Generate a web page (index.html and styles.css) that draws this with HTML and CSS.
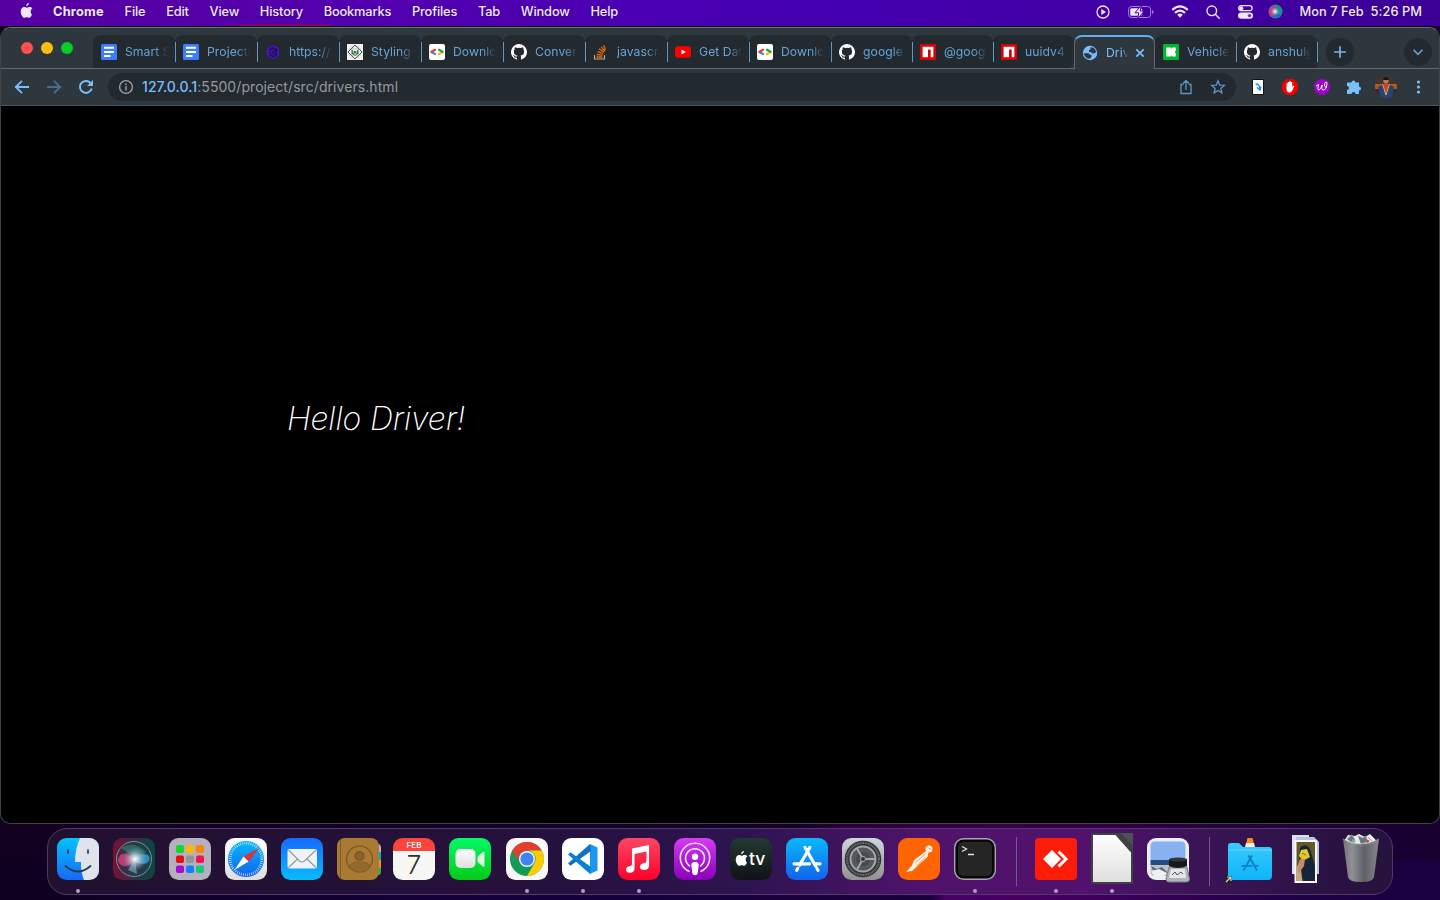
FILE: index.html
```html
<!DOCTYPE html>
<html lang="en">
<head>
<meta charset="utf-8">
<title>Drivers</title>
<link rel="stylesheet" href="styles.css">
</head>
<body>
<svg class="defs" aria-hidden="true">
  <defs>
    <linearGradient id="gBlue" x2="0" y2="1"><stop stop-color="#1769fb"/><stop offset="1" stop-color="#08bcff"/></linearGradient>
    <linearGradient id="gFinder" x2="0" y2="1"><stop stop-color="#05c3fb"/><stop offset="1" stop-color="#1768f8"/></linearGradient>
    <linearGradient id="gSky" x2="0" y2="1"><stop stop-color="#08b9fc"/><stop offset="1" stop-color="#1462ec"/></linearGradient>
    <linearGradient id="gGreen" x2="0" y2="1"><stop stop-color="#05f966"/><stop offset="1" stop-color="#04cb18"/></linearGradient>
    <linearGradient id="gRed" x2="0" y2="1"><stop stop-color="#fc4667"/><stop offset="1" stop-color="#fa0229"/></linearGradient>
    <linearGradient id="gPurple" x2="0" y2="1"><stop stop-color="#d63bf5"/><stop offset="1" stop-color="#8900b9"/></linearGradient>
    <linearGradient id="gWhite" x2="0" y2="1"><stop stop-color="#fff"/><stop offset="1" stop-color="#dedede"/></linearGradient>
    <linearGradient id="gGray" x2="0" y2="1"><stop stop-color="#cbd7dc"/><stop offset="1" stop-color="#929190"/></linearGradient>
    <linearGradient id="gSiri"><stop stop-color="#790e35"/><stop offset=".5" stop-color="#333047"/><stop offset="1" stop-color="#06483e"/></linearGradient>
    <radialGradient id="gGlow"><stop stop-color="#fff"/><stop offset=".3" stop-color="#d9dbe9" stop-opacity=".8"/><stop offset="1" stop-color="#7ba3ba" stop-opacity="0"/></radialGradient>
    <linearGradient id="gFolder" x2="0" y2="1"><stop stop-color="#38cafe"/><stop offset="1" stop-color="#0fb4f8"/></linearGradient>
    <linearGradient id="gBin"><stop stop-color="#77797c"/><stop offset=".25" stop-color="#949699"/><stop offset=".6" stop-color="#626468"/><stop offset="1" stop-color="#8b8c90"/></linearGradient>
    <symbol id="apple" viewBox="0 0 14 17"><path d="M9.6 0c.1 1.600-1.300 3.300-2.900 3.400C6.500 1.800 8 .2 9.600 0zM12.900 12.200c-.7 1.700-1.900 3.700-3.100 3.700-.9 0-1.300-.6-2.500-.6s-1.600.6-2.500.6C3.200 15.900.8 12.600.8 9c0-2.900 1.800-4.700 3.700-4.700 1.100 0 1.900.7 2.900.7s1.700-.8 3.100-.8c1.200 0 2.200.6 2.800 1.500-2.500 1.500-2.100 5.300-.4 6.500z"/></symbol>
    <symbol id="doc" viewBox="0 0 16 16"><rect width="16" height="16" rx="1.500" fill="#3d7dfd"/><path d="M3 3.800h10M3 7.900h10M3 12h6.500" stroke="#fff" stroke-width="2"/></symbol>
    <symbol id="github" viewBox="0 0 16 16"><path fill="#fff" d="M8 0a8 8 0 0 0-2.500 15.600c.4.100.5-.2.500-.4v-1.500c-2.200.5-2.700-1-2.700-1-.4-.9-.9-1.200-.9-1.200-.7-.5.100-.5.100-.5.800.1 1.200.8 1.200.8.700 1.200 1.900.9 2.300.7.100-.5.300-.9.500-1.100-1.800-.2-3.600-.9-3.600-4 0-.9.300-1.600.8-2.100-.1-.2-.4-1 .1-2.100 0 0 .7-.2 2.200.8a7.700 7.700 0 0 1 4 0c1.500-1 2.200-.8 2.200-.8.400 1.100.2 1.900.1 2.100.5.600.8 1.300.8 2.100 0 3.100-1.900 3.800-3.700 4 .3.300.6.800.6 1.500v2.300c0 .2.100.5.500.4A8 8 0 0 0 8 0z"/></symbol>
    <symbol id="gdev" viewBox="0 0 16 16"><rect width="16" height="16" rx="2" fill="#fff"/><g fill="none" stroke-width="2.300" stroke-linecap="round"><path d="M2.500 8 6 10" stroke="#4285f4"/><path d="M2.500 7.700 6 5.800" stroke="#ea4335"/><path d="M13.500 8 10 10" stroke="#fbbc04"/><path d="M13.500 7.700 10 5.800" stroke="#1ca652"/></g></symbol>
    <symbol id="npm" viewBox="0 0 16 16"><path fill="#d90008" d="M0 0h16v16H0z"/><path fill="#fff" d="M2.600 2.800h10.800v10.500h-2.700V5.500H8v7.800H2.600z"/></symbol>
    <symbol id="store" viewBox="0 0 30 27"><g fill="none" stroke="currentColor" stroke-width="3.200" stroke-linecap="round"><path d="m13 2 10.600 18.500M17.800 2 7.500 19.700M5.700 23l-1 1.800M2 18.300h15.500M23 18.300h5M25 23l1 1.800"/></g></symbol>
  </defs>
</svg>

<div class="desktop">
  <header class="menubar">
    <nav class="menus">
      <svg class="apple"><use href="#apple"/></svg>
      <b>Chrome</b><span>File</span><span>Edit</span><span>View</span><span>History</span><span>Bookmarks</span><span>Profiles</span><span>Tab</span><span>Window</span><span>Help</span>
    </nav>
    <div class="status">
      <svg width="14" height="14" viewBox="0 0 14 14"><circle cx="7" cy="7" r="6" fill="none" stroke="#eee6fb" stroke-width="1.300"/><path d="M5.300 4v6l4.700-3z" fill="#eee6fb"/></svg>
      <svg class="battery" width="26" height="14" viewBox="0 0 26 14"><rect x=".6" y="1.500" width="22" height="11" rx="3" fill="none" stroke="#a884d9"/><path d="M24 5v4q1.500-.5 1.500-2T24 5z" fill="#a884d9"/><rect x="2.200" y="3.200" width="12" height="7.600" rx="1.500" fill="#eee6fb"/><path d="M13.500 0 7 7.800h3.800L9.500 14l6.600-8h-3.900z" fill="#eee6fb" stroke="#4300a9"/></svg>
      <svg class="wifi" width="18" height="13" viewBox="0 0 18 13"><g fill="none" stroke="#eee6fb" stroke-width="2.200"><path d="M1.200 4.900q7.800-7 15.600 0M4 7.900q5-4.600 10 0"/></g><path d="m6.200 9.700 2.800 3 2.800-3q-2.800-2.200-5.600 0z" fill="#eee6fb"/></svg>
      <svg class="search" width="14" height="14" viewBox="0 0 14 14"><g fill="none" stroke="#eee6fb" stroke-width="1.400" stroke-linecap="round"><circle cx="5.800" cy="5.800" r="4.800"/><path d="m9.300 9.300 3.900 3.900"/></g></svg>
      <svg class="control" width="15" height="14" viewBox="0 0 15 14"><rect x=".7" y=".7" width="13.400" height="5" rx="2.500" fill="none" stroke="#eee6fb" stroke-width="1.300"/><circle cx="3.300" cy="3.200" r="2" fill="#eee6fb"/><rect y="7.400" width="15" height="6.400" rx="3.200" fill="#eee6fb"/><circle cx="11.500" cy="10.600" r="1.700" fill="#6632b0"/></svg>
      <svg class="siri" width="15" height="15" viewBox="0 0 15 15"><circle cx="7.500" cy="7.500" r="7" fill="#19908c"/><path d="M7 1a7 7 0 0 0-4 12l5-5z" fill="#c83a83"/><path d="M4 12q5-4 9-1-4 5-9 1" fill="#3165c8"/><circle cx="7" cy="7.500" r="4.500" fill="url(#gGlow)"/></svg>
      <time>Mon 7 Feb&nbsp; 5:26 PM</time>
    </div>
  </header>

  <main class="window">
    <div class="tabstrip">
      <div class="lights"><i class="close"></i><i class="min"></i><i class="max"></i></div>
      <div class="tabs">
        <div class="tab"><svg><use href="#doc"/></svg><span>Smart S</span></div>
        <div class="tab"><svg><use href="#doc"/></svg><span>ProjectD</span></div>
        <div class="tab"><svg viewBox="0 0 16 16"><path d="m8 1.500 5.500 3.200v6.600L8 14.500l-5.500-3.200V4.700z" fill="#3a10b0" stroke="#5313d1"/><path d="m4 6 4-2 4 2-5 2M5 8v3l3 2 3-2V8L8 10" fill="none" stroke="#21123d" stroke-width="1.200"/></svg><span>https://l</span></div>
        <div class="tab"><svg viewBox="0 0 16 16"><path d="M0 0h16v16H0z" fill="#f1f1ec"/><path d="m8 1 7 7-7 7-7-7z" fill="none" stroke="#464b48"/><path d="M2 5h12M2 11h12M5 2v12M11 2v12" stroke="#9a9f9b" stroke-width=".5"/><path d="M4.500 5.500 6.500 7h3l2-1.500v4L8 12 4.500 9.500z" fill="#427657"/><path d="M6 8h1m2 0h1M7 10h2" stroke="#fff"/></svg><span>Styling</span></div>
        <div class="tab"><svg><use href="#gdev"/></svg><span>Downlo</span></div>
        <div class="tab"><svg><use href="#github"/></svg><span>Convert</span></div>
        <div class="tab"><svg viewBox="0 0 16 16"><path d="M1.500 11v4h10v-4" fill="none" stroke="#a9adb0" stroke-width="1.200"/><g stroke="#ee6902" stroke-width="1.300"><path d="M3.500 13h6M3.700 10.500l6 .6M4.500 7.700l5.600 1.800M6 4.800l5 3.300M8.200 2.800l3.600 4.300M10.800 1.300l1.500 5"/></g></svg><span>javascri</span></div>
        <div class="tab"><svg viewBox="0 0 16 16"><rect y="2.300" width="16" height="11.500" rx="3" fill="#f00"/><path d="m6.500 5.600 4.300 2.400-4.300 2.500z" fill="#fff"/></svg><span>Get Dat</span></div>
        <div class="tab"><svg><use href="#gdev"/></svg><span>Downlo</span></div>
        <div class="tab narrow"><svg><use href="#github"/></svg><span>google-</span></div>
        <div class="tab narrow"><svg><use href="#npm"/></svg><span>@googl</span></div>
        <div class="tab narrow before"><svg><use href="#npm"/></svg><span>uuidv4</span></div>
        <div class="tab narrow active"><svg viewBox="0 0 16 16"><circle cx="8" cy="8" r="7.200" fill="#78bffd"/><path d="M1.800 8.300h4.400q1.800 0 1.800 1.800h1.500v1.600q-1 1.800-2 2-5.200-.5-5.700-5.400M8.500 2.200q4.500 0 5.700 4.800L12 8.500H9.500V7H7V5l1.500-.5z" fill="#2f373e"/></svg><span>Drive</span><svg class="x" viewBox="0 0 10 10"><path d="m1.300 1.300 7.400 7.400m0-7.400L1.300 8.700" stroke="#79bffc" stroke-width="1.700"/></svg></div>
        <div class="tab narrow"><svg viewBox="0 0 16 16"><rect width="16" height="16" rx="1" fill="#02b832"/><path d="M3.300 3.500h4.700v1.500l1.200-1.500h3.600v3.300L11.600 8l1.200 1.200v3.300H9.200L8 11v1.500H3.300z" fill="#fff"/></svg><span>Vehicle</span></div>
        <div class="tab narrow"><svg><use href="#github"/></svg><span>anshulg</span></div>
      </div>
      <svg class="round" viewBox="0 0 28 28"><path d="M14 8.200v11.600M8.200 14h11.600" stroke="#72b6f0" stroke-width="1.700"/></svg>
      <svg class="round list" viewBox="0 0 28 28"><path d="m9.500 11.800 4.500 4.500 4.500-4.500" fill="none" stroke="#649bcb" stroke-width="1.700"/></svg>
    </div>
    <div class="toolbar">
      <svg class="nav" viewBox="0 0 16 16"><path d="M15 8H2.500M8 1.800 1.800 8 8 14.200" fill="none" stroke="#79bffc" stroke-width="1.900"/></svg>
      <svg class="nav" viewBox="0 0 16 16"><path d="M1 8h12.500M8 1.800 14.200 8 8 14.200" fill="none" stroke="#496d8c" stroke-width="1.900"/></svg>
      <svg class="nav" viewBox="0 0 16 16"><path d="M13.700 9.500A6 6 0 1 1 12.500 4" fill="none" stroke="#79bffc" stroke-width="2"/><path d="M15 1v6H9z" fill="#79bffc"/></svg>
      <div class="address">
        <svg viewBox="0 0 16 16" class="info"><circle cx="8" cy="8" r="6.400" fill="none" stroke="#9ba0a4" stroke-width="1.400"/><path d="M8 7v4.600M8 4.400v1.700" stroke="#9ba0a4" stroke-width="1.500"/></svg>
        <p><b>127.0.0.1</b>:5500/project/src/drivers.html</p>
        <svg class="share" viewBox="0 0 16 16"><path d="M5.300 5.500H3v9h10v-9h-2.300M8 11V2M5 4.500l3-3 3 3" fill="none" stroke="#6095c3" stroke-width="1.300"/></svg>
        <svg class="star" viewBox="0 0 16 16"><path d="m8 1.800 1.700 4.300 4.600.3-3.500 3 1.100 4.500L8 11.500l-3.900 2.400 1.100-4.500-3.500-3 4.600-.3z" fill="none" stroke="#6095c3" stroke-width="1.300"/></svg>
      </div>
      <div class="extensions">
        <svg viewBox="0 0 16 16"><path d="M2.500.5h11v15h-11z" fill="#fff" stroke="#111"/><path d="M5.500 5q4 0 4.500 5M7 8.500l3 2.500 1-3.500" fill="none" stroke="#168bf7" stroke-width="1.400"/></svg>
        <svg viewBox="0 0 16 16"><path d="M4.700 0h6.600L16 4.700v6.600L11.300 16H4.700L0 11.300V4.700z" fill="#f40000"/><path d="M4.500 8.500V4.300h1.300V3h1.400v-.8h1.500V3h1.500v5l1-1.500 1 .8-2 4.500q-1 1.700-3 1.700-3 0-2.700-5z" fill="#fff"/></svg>
        <svg viewBox="0 0 16 16"><circle cx="8" cy="8" r="8" fill="#9b05c6"/><path d="M2 7 4.700 5.500q-1.700 5.500 0 5.500t3.500-5q-1 5 .8 5 3.500 0 4-6.500 0-2-1.200-1.500-1.500 1-1.300 3.500.3 2 2.500 1.500" fill="none" stroke="#fff" stroke-width="1"/></svg>
        <svg viewBox="0 0 16 16"><path d="M1 3.500h4.500a2 2 0 1 1 4 0H13v4a2 2 0 1 1 0 4V15H9.500a2 2 0 0 0-4 0H1v-4a2 2 0 0 0 0-4z" fill="#79bffc"/></svg>
        <svg class="avatar" viewBox="0 0 22 22"><defs><clipPath id="av"><circle cx="11" cy="11" r="11"/></clipPath></defs><g clip-path="url(#av)"><path d="M0 0h22v22H0z" fill="#4a3228"/><path d="M0 8h22v5H0z" fill="#b55b18"/><path d="M0 13h22v9H0z" fill="#3a2a2a"/><path d="m3 11 5-3h6l5 3-2 11H5z" fill="#25447a"/><path d="m8 8 3 10 3-10z" fill="#d93a2c"/><path d="M7.500 8 11 19l3.500-11" fill="none" stroke="#e8b53a"/><circle cx="11" cy="5" r="2.700" fill="#b47a5c"/><path d="M8 4q0-3 3-3t3 3z" fill="#171719"/></g></svg>
        <svg viewBox="0 0 16 16"><g fill="#79bffc"><circle cx="8.500" cy="3" r="1.600"/><circle cx="8.500" cy="8" r="1.600"/><circle cx="8.500" cy="13" r="1.600"/></g></svg>
      </div>
    </div>
    <section class="page"><h1>Hello Driver!</h1></section>
  </main>

  <footer class="dockwrap"><div class="dock">
    <div class="app run"><svg viewBox="0 0 42 42"><rect width="42" height="42" rx="9.500" fill="url(#gFinder)"/><path d="M23 0q-5 11-5 24h6q-.5 9 3 18h5.500a9.500 9.500 0 0 0 9.500-9.500v-23A9.500 9.500 0 0 0 32.500 0z" fill="#dfe4ec"/><path d="M11 12v3m20-3v3M8.500 28q12.500 11 25 0" fill="none" stroke="#20384d" stroke-width="1.700" stroke-linecap="round"/></svg></div>
    <div class="app"><svg viewBox="0 0 42 42"><rect width="42" height="42" rx="9.500" fill="url(#gSiri)"/><circle cx="21" cy="21" r="17.500" fill="#263b54" fill-opacity=".5" stroke="#739692"/><path d="M8 10q13-8 25 4-8 5-12 6-7-6-13-10" fill="#2d9a7c" opacity=".5"/><path d="M5 22q2-8 9-6 5 2 8 5-7 10-14 6-3-2-3-5" fill="#e0417e" opacity=".75"/><path d="M20 21q9-7 15-4 4 4-1 8-9 3-14-4" fill="#2caadc" opacity=".75"/><path d="m22 21 2 15-9-4z" fill="#7ab6c4" opacity=".6"/><circle cx="22" cy="21" r="12" fill="url(#gGlow)"/></svg></div>
    <div class="app"><svg viewBox="0 0 42 42"><rect width="42" height="42" rx="9.500" fill="#b5b0bd"/><g><rect x="7" y="7" width="8" height="8" rx="2" fill="#16d828"/><rect x="17" y="7" width="8" height="8" rx="2" fill="#fab802"/><rect x="27" y="7" width="8" height="8" rx="2" fill="#f98506"/><rect x="7" y="17.500" width="8" height="7.500" rx="2" fill="#e70c13"/><rect x="17" y="17.500" width="8" height="7.500" rx="2" fill="#8f979c"/><rect x="27" y="17.500" width="8" height="7.500" rx="2" fill="#f90f4b"/><rect x="7" y="27.500" width="8" height="7.500" rx="2" fill="#a40bd1"/><rect x="17" y="27.500" width="8" height="7.500" rx="2" fill="#147eff"/><rect x="27" y="27.500" width="8" height="7.500" rx="2" fill="#12c883"/></g></svg></div>
    <div class="app"><svg viewBox="0 0 42 42"><rect width="42" height="42" rx="9.500" fill="url(#gWhite)"/><circle cx="21" cy="21" r="18" fill="url(#gSky)"/><circle cx="21" cy="21" r="15.800" fill="none" stroke="#d6f1ff" stroke-width="2.600" stroke-dasharray=".7 1.370"/><path d="M34 10 18.500 18.500l5 5z" fill="#e92c2c"/><path d="m9.500 32 9-13.500 5 5z" fill="#fff"/></svg></div>
    <div class="app"><svg viewBox="0 0 42 42"><rect width="42" height="42" rx="9.500" fill="url(#gBlue)"/><rect x="6.500" y="11" width="29.500" height="19.500" rx="2" fill="#eff3f5"/><path d="m7.500 12 11 11q2.500 2 5 0L35 12M7.500 29.500l9-8.500m18.500 8.500L26 21" fill="none" stroke="#8f989e" stroke-width="1.100"/></svg></div>
    <div class="app"><svg viewBox="0 0 42 42"><path d="M39 6h3q2 1 2 4v4h-5z" fill="#b7b5ae"/><path d="M39 14h5v8h-5z" fill="#16a8c4"/><path d="M39 22h5v8h-5z" fill="#ed911a"/><path d="M39 30h5v4q0 3-3 3h-2z" fill="#16bd52"/><rect width="42" height="42" rx="8" fill="#a87a33"/><path d="M3.500 2v38" stroke="#805a22"/><g fill="none" stroke="#79551f" stroke-width="1.200"><circle cx="22.500" cy="21" r="13"/><path d="M12 29q1.500-5 10.500-5T33 29q-4 5-10.500 5T12 29z" fill="#916a2c" stroke="#88622a"/><circle cx="22.500" cy="18" r="4.500" fill="#88622a"/></g></svg></div>
    <div class="app calendar"><small>FEB</small><strong>7</strong></div>
    <div class="app"><svg viewBox="0 0 42 42"><rect width="42" height="42" rx="9.500" fill="url(#gGreen)"/><rect x="6.500" y="11" width="20" height="19" rx="5" fill="url(#gWhite)"/><path d="M28.500 18.500 34 14q1.500-1 1.500 1v12.500q0 2-1.500 1L28.500 24z" fill="#dbf8df"/></svg></div>
    <div class="app run shift"><svg viewBox="0 0 42 42"><rect width="42" height="42" rx="9.500" fill="#f8f8f8"/><circle cx="21" cy="21" r="17" fill="#119b58"/><path d="M6.300 12.500A17 17 0 0 1 35.700 12.500H21a8.500 8.500 0 0 0-7.400 12.800z" fill="#e73b2d"/><path d="M35.700 12.500A17 17 0 0 1 21 38l7.400-12.700A8.500 8.500 0 0 0 21 12.500z" fill="#fdcd04"/><circle cx="21" cy="21" r="8" fill="#f5f7fa"/><circle cx="21" cy="21" r="6.600" fill="#4482f4"/></svg></div>
    <div class="app run"><svg viewBox="0 0 42 42"><rect width="42" height="42" rx="9.500" fill="#fff"/><path d="m28 6 7.500 3.500v23L28 36z" fill="#1d96ed"/><path d="M28 6 6 25.500l2.500 2.300L29 13z" fill="#1271bc"/><path d="M28 36 6 16.500l2.500-2.300L29 29z" fill="#0781d2"/></svg></div>
    <div class="app run"><svg viewBox="0 0 42 42"><rect width="42" height="42" rx="9.500" fill="url(#gRed)"/><path d="M14 10.500 31 7v20.500q0 4-4.500 4.500-4.500 0-4.500-3 0-3.500 4-4 2.500 0 2.500-2V13.500L16.500 16v14.500q0 4-4.500 4.300-4 0-4-3 0-3.300 4-3.800 2 0 2-2z" fill="#fff"/></svg></div>
    <div class="app"><svg viewBox="0 0 42 42"><rect width="42" height="42" rx="9.500" fill="url(#gPurple)"/><g fill="none" stroke="#fbe7ff" stroke-width="1.500"><path d="M15.500 33.500a14.700 14.700 0 1 1 11 0"/><path d="M16 28.300a9.500 9.500 0 1 1 10 0"/></g><circle cx="21" cy="18.700" r="3.200" fill="#fff"/><path d="M17.300 27q0-3 3.700-3t3.700 3l-1 8q-.5 2.200-2.700 2.200T18.300 35z" fill="#fff"/></svg></div>
    <div class="app tv"><svg><use href="#apple"/></svg><span>tv</span></div>
    <div class="app"><svg viewBox="0 0 42 42" color="#fff"><rect width="42" height="42" rx="9.500" fill="url(#gSky)"/><use href="#store" x="6" y="7.500" width="30" height="27"/></svg></div>
    <div class="app"><svg viewBox="0 0 42 42"><rect width="42" height="42" rx="9.500" fill="url(#gGray)"/><circle cx="21" cy="21" r="18.300" fill="#343638"/><circle cx="21" cy="21" r="16" fill="none" stroke="#7b7f81" stroke-width="2" stroke-dasharray=".8 .8"/><circle cx="21" cy="21" r="12.500" fill="#55585b" stroke="#a4a8aa" stroke-width="2"/><circle cx="21" cy="21" r="7" fill="#484b4e"/><path d="M21 21h12M21 21 15 10.500M21 21l-6 10.500" stroke="#a4a8aa" stroke-width="2"/><circle cx="21" cy="21" r="2.500" fill="#333" stroke="#aaa"/></svg></div>
    <div class="app"><svg viewBox="0 0 42 42"><rect width="42" height="42" rx="9.500" fill="#ff6402"/><circle cx="31" cy="11" r="3.500" fill="#fff6ef"/><path d="m27.500 13.500 3 1L29.500 19 20 27.500l-6 5.500-6 1 6-6.500 2-5.500z" fill="#fff6ef"/><path d="m27.500 15.500-10 9.500m9.500-5.500-8 8M30.500 10l3 1.500" stroke="#ff6402" stroke-width=".7"/></svg></div>
    <div class="app run"><svg viewBox="0 0 42 42"><rect x=".7" y=".7" width="40.600" height="40.600" rx="9" fill="#080808" stroke="#a0aaac" stroke-width="1.400"/><rect x="4" y="4" width="34" height="34" rx="5" fill="#252525"/><path d="m8 8.500 4.500 2.500L8 13.500M14 16.500h6" fill="none" stroke="#e0e0e0" stroke-width="1.300"/></svg></div>
    <i class="divider"></i>
    <div class="app run"><svg viewBox="0 0 42 42"><rect width="42" height="42" rx="4" fill="#fd1c08"/><path d="m17 12 9 9-9 9-9-9z" fill="#fff"/><path d="m23.500 13.500 7.500 7.500-7.500 7.500" fill="none" stroke="#fff" stroke-width="3"/></svg></div>
    <div class="app run"><svg viewBox="0 0 42 42"><path d="M1-4h24L41 14v31H1z" fill="url(#gWhite)" stroke="#3f4142" stroke-width="2"/><path d="M23-5h6l13 13v8z" fill="#3f4142"/><path d="M29-5h13V8z" fill="#4d4f51"/></svg></div>
    <div class="app"><svg viewBox="0 0 42 42"><rect width="42" height="42" rx="9" fill="#eeeef2"/><path d="M3.500 8Q3.500 3.500 8 3.500h26q4.500 0 4.500 4.500v14h-35z" fill="#87b2ef"/><path d="M3.500 22h35v5h-35z" fill="#254d82"/><path d="M3.500 27h35v11H8q-4.500 0-4.500-4.500z" fill="#b8c1cc"/><path d="m4 28 6 3 5-2 6 6H7z" fill="#5f6873"/><path d="m4 33 8-2 8 4-3 3H7z" fill="#ecf1f3"/><path d="M22 29h18l2.500 12q0 3-3 3H22q-3 0-3-3z" fill="#aeb4b7" stroke="#777d80"/><path d="M22 21h18v7q-9 4-18 0z" fill="#17181a"/><ellipse cx="31" cy="21.500" rx="9" ry="2" fill="#34373a"/><path d="M24 31h14l1 9H22z" fill="#e4e7e8"/><path d="m25 37 3-3 2 3 4-3 2 2" fill="none" stroke="#555"/></svg></div>
    <i class="divider"></i>
    <div class="app"><svg viewBox="0 0 42 42"><path d="M19.500 0h5l1.500 6h-8z" fill="#fa8b14"/><path d="M18 5h8l1 4H17z" fill="#eee"/><path d="M0 8q0-3 3-3h8l4 4h26q3 0 3 3v26q0 4-4 4H4q-4 0-4-4z" fill="url(#gFolder)"/><path d="M0 12h44" stroke="#78ddff" stroke-width=".8"/><use href="#store" x="13" y="17" width="18" height="16" color="#087fbf"/><path d="M-3 38h7v7h-7z" fill="#222"/><path d="m-2 44 5-5M-1 39h4v4" fill="none" stroke="#ddd" stroke-width="1.200"/></svg></div>
    <div class="app"><svg viewBox="0 0 42 42"><path d="M8-3h17v39H8z" fill="#dae1f0"/><path d="M12-1h18l5 5v32H12z" fill="#b9c6df"/><path d="M10.500 2h22.500v43H10.500z" fill="#faf9f5"/><path d="M12.500 4h18.500v39H12.500z" fill="#61582b"/><path d="M16 10q5-6 10 1l5 17v15H16l-2-9z" fill="#16243a"/><path d="M12.500 28h4l2 15h-6z" fill="#c2aa83"/><path d="m17 12 6-1 3 8-7 4-4-5z" fill="#e9c720"/><path d="m16 21 5 0-1 7-5 7-2-6z" fill="#c98c68"/><path d="m18 15 4 2" stroke="#487c3b"/></svg></div>
    <div class="app"><svg viewBox="0 0 42 42"><path d="m4 3 4-6 7 1 4-2 6 3 5-3 5 5 2 4-15 4z" fill="#ecedeb"/><path d="m7 1 5-4 3 5-4 2m7-6 5 2 3-2 1 6-6 2m7-7 4 4" fill="#6c7378" stroke="#9ba2a8"/><path d="m12 1 4 2-3 3z" fill="#5db8ca"/><path d="m26 1 4 2-3 2z" fill="#b54a35"/><path d="M3 1q17 10 36 0l-5 38q-.5 5-13 5T8 39z" fill="url(#gBin)" fill-opacity=".96"/><path d="M3 1q17 10 36 0" fill="none" stroke="#b4b5b7" stroke-width=".8" opacity=".7"/></svg></div>
  </div></footer>
</div>
</body>
</html>
```

FILE: styles.css
```css
* { box-sizing: border-box; }
body { margin: 0; background: #13002b; font-family: Inter, "Liberation Sans", sans-serif; overflow: hidden; }
svg { display: block; flex: none; overflow: visible; }
.defs { position: absolute; width: 0; height: 0; }
.desktop {
  width: 1440px; height: 900px; display: flex; flex-direction: column;
  background:
    linear-gradient(90deg, transparent 220px, #8b006f 250px, #8b0070 330px, transparent 331px) 0 24px / 100% 2px no-repeat,
    linear-gradient(90deg, #5700a2, #5200b0 400px, #4500b1 800px, #3d0097) 0 0 / 100% 26px no-repeat,
    linear-gradient(90deg, #12001f, #12002b 800px, #2b0038 840px, #360046 1000px, #1b0038 1360px, #17002e) 0 820px / 100% 40px no-repeat,
    linear-gradient(90deg, #0e001f, #15003a 500px, #18003c 930px, #480064 945px, #43005e 1060px, #1d0044 1300px, #19003e);
}
.menubar { height: 27px; border-bottom: 1px solid #080012; display: flex; justify-content: space-between; color: #f0e8fb; padding: 0 18px 3px 20px; font-size: 12.800px; font-weight: 500; line-height: 24px; white-space: nowrap; text-shadow: 0 1px 2px #0005; }
.menus { display: flex; gap: 20.700px; }
.apple { width: 13px; height: 16px; margin: 3px -.7px 0 0; fill: #eee6fb; }
.menus b { font-weight: 700; letter-spacing: .22px; }
.menus span { letter-spacing: -.14px; }
.status { display: flex; align-items: center; letter-spacing: .05px; }
.battery { margin-left: 18px; }
.wifi { margin-left: 17px; }
.search { margin-left: 17px; }
.control { margin-left: 18px; }
.siri { margin: 0 16px 0 15.500px; }
.window { height: 797px; border: 1px solid #555a5e; border-color: #6a7074 #434343 #434343; border-radius: 11px 11px 10px 10px; background: #000; overflow: hidden; display: flex; flex-direction: column; }
.tabstrip { height: 41px; flex: none; background: #2f373e; border-bottom: 1px solid #62686c; display: flex; align-items: flex-end; }
.lights { display: flex; gap: 8px; width: 92px; padding-left: 20px; height: 26px; }
.lights i { width: 12px; height: 12px; border-radius: 50%; background: #ff5147; }
.lights .min { background: #ffbd05; }
.lights .max { background: #04cf26; }
.tabs { display: flex; width: 1224px; height: 34px; margin-bottom: -1px; }
.tab { position: relative; flex: none; width: 82px; height: 33px; background: #22292f; border-radius: 8px 8px 0 0; display: flex; align-items: center; padding-left: 8px; color: #68a3d6; }
.tab.narrow { width: 81px; }
.tab::after { content: ""; position: absolute; z-index: 1; right: -1px; top: 7px; width: 1px; height: 20px; background: #6095c1; }
.tab > svg { width: 16px; height: 16px; }
.tab span { width: 43px; margin-left: 8px; overflow: hidden; white-space: nowrap; font-size: 12.200px; line-height: 18px; letter-spacing: .05px; -webkit-mask-image: linear-gradient(90deg, #000 70%, transparent); mask-image: linear-gradient(90deg, #000 70%, transparent); }
.tab.before { border-bottom-right-radius: 8px; }
.tab.before::after { display: none; }
.tab.active { height: 34px; background: #2f373e; border: 1px solid #62686c; border-top: 2px solid #62adf5; border-bottom: 0; padding-left: 7px; color: #79bffc; }
.tab.active::after { display: none; }
.tab.active span { width: 22px; }
.tab.active .x { width: 10px; height: 10px; margin-left: 7px; }
.round { width: 28px; height: 28px; border-radius: 50%; background: #22292f; margin: 0 0 2px 9px; }
.round.list { margin-left: 50px; }
.toolbar { height: 37px; flex: none; background: #2f373e; border-bottom: 1px solid #46525c; display: flex; align-items: center; padding-left: 13px; }
.nav { width: 16px; height: 16px; margin-right: 16px; }
.address { width: 1128px; height: 28px; margin-left: -2px; background: #22292f; border-radius: 14px; display: flex; align-items: center; padding: 0 10px; }
.address .info { width: 16px; height: 16px; }
.address p { flex: 1; margin: 0 0 0 8px; font-size: 14px; line-height: 20px; letter-spacing: .07px; color: #959a9d; }
.address b { color: #79bffc; font-weight: 500; }
.share, .star { width: 16px; height: 16px; }
.star { margin-left: 16px; }
.extensions { display: flex; align-items: center; gap: 16px; margin-left: 14px; }
.extensions svg { width: 16px; height: 16px; }
.extensions .avatar { width: 22px; height: 22px; margin: 0 -3px; }
.page { flex: 1; padding: 288px 0 0 286px; }
h1 { margin: 0; color: #fff; font: italic 200 32px/50px Inter, Lato, sans-serif; letter-spacing: -.1px; white-space: nowrap; }
.dockwrap { display: flex; justify-content: center; padding-top: 4px; }
.dock { width: 1346px; height: 67px; padding: 9px; border: 1px solid #553769; border-radius: 20px; display: flex; gap: 14px; background: linear-gradient(90deg, #22102f, #25113d 500px, #2d1450 700px, #50136c 880px, #51116c 1040px, #3c1458 1140px, #2a1243 1280px, #26123c); }
.app { position: relative; width: 42px; height: 42px; flex: none; }
.app.shift { margin-left: 1px; }
.app > svg { width: 42px; height: 42px; }
.app.run::after { content: ""; position: absolute; width: 4px; height: 4px; border-radius: 50%; background: #b69bcb; left: 19px; top: 51px; }
.divider { width: 1px; height: 49px; margin: -1px 4px 0 6px; background: #77588d; }
.calendar { border-radius: 9.500px; background: linear-gradient(#fa453b 13px, #f6f6f5 13px); text-align: center; display: flex; flex-direction: column; color: #303030; }
.calendar small { color: #fff; font-size: 8px; line-height: 14px; font-weight: 500; }
.calendar strong { font-size: 26px; line-height: 25px; font-weight: 300; }
.tv { background: linear-gradient(#243832, #101317); border-radius: 9.500px; display: flex; align-items: center; padding-left: 5px; color: #fff; }
.tv > svg { width: 13px; height: 16px; fill: #fff; }
.tv span { font-size: 17.500px; line-height: 20px; margin-left: 1px; font-weight: 500; }
```
